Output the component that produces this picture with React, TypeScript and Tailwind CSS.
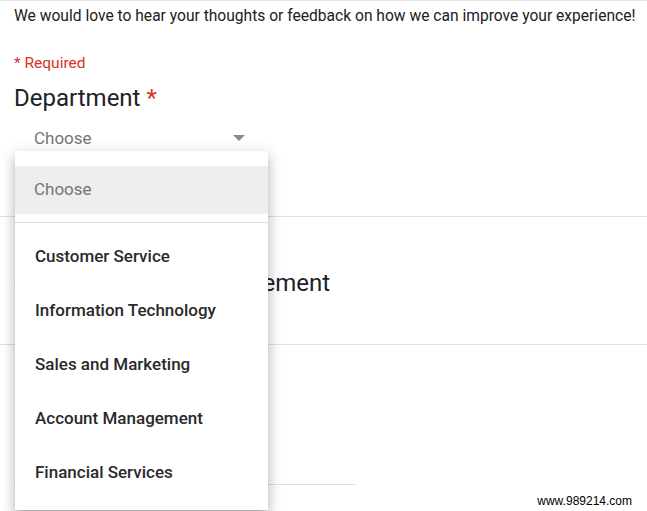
const departments = [
  "Customer Service",
  "Information Technology",
  "Sales and Marketing",
  "Account Management",
  "Financial Services",
];

function DepartmentMenu() {
  return (
    <div className="absolute left-[15px] top-[150px] w-[253px] bg-white pt-[15px] pb-[10px] shadow-[0_8px_10px_1px_rgba(0,0,0,0.14),0_3px_14px_2px_rgba(0,0,0,0.12),0_5px_5px_-3px_rgba(0,0,0,0.2)]">
      <div className="flex h-[48px] items-center bg-[#eeeeee] pl-[19px] text-[17px] text-[#757575]">
        Choose
      </div>
      <div className="mt-[8px] mb-[7px] border-t border-[#e0e0e0]" />
      {departments.map((name) => (
        <div
          key={name}
          className="flex h-[54px] items-center pl-[20px] text-[17px] font-medium text-[#2a2a2a]"
        >
          {name}
        </div>
      ))}
    </div>
  );
}

export default function App() {
  return (
    <div className="relative h-[511px] w-[647px] overflow-hidden border-t border-[#e3e3e3] bg-white font-['Roboto',sans-serif]">
      <div className="h-[216px] border-b border-[#e0e0e0] px-[14px]">
        <p className="whitespace-nowrap pt-[5px] text-[15.6px] leading-[20px] text-[#202124]">
          We would love to hear your thoughts or feedback on how we can improve your experience!
        </p>
        <p className="mt-[27px] text-[15.5px] leading-[20px] text-[#d93025]">* Required</p>
        <h2 className="mt-[9px] text-[24px] leading-[32px] text-[#202124]">
          Department <span className="text-[#d93025]">*</span>
        </h2>
        <div className="mt-[12px] flex w-[230px] items-center justify-between pl-[20px]">
          <span className="text-[17px] leading-[24px] text-[#757575]">Choose</span>
          <svg width="12" height="6" viewBox="0 0 12 6" className="mr-[-1px]">
            <path d="M0 0h12L6 6z" fill="#8a8a8a" />
          </svg>
        </div>
      </div>

      <div className="h-[128px] border-b border-[#e0e0e0] px-[14px]">
        <h2 className="pt-[50px] text-[24px] leading-[32px] text-[#202124]">
          Suggestions for Improvement
        </h2>
      </div>

      <div className="px-[14px] pt-[139px]">
        <div className="w-[341px] border-b border-[#e0e0e0]" />
      </div>

      <DepartmentMenu />

      <span className="absolute right-[15px] bottom-[3px] font-['Liberation_Sans',sans-serif] text-[12px] leading-[14px] text-black">
        www.989214.com
      </span>
    </div>
  );
}
